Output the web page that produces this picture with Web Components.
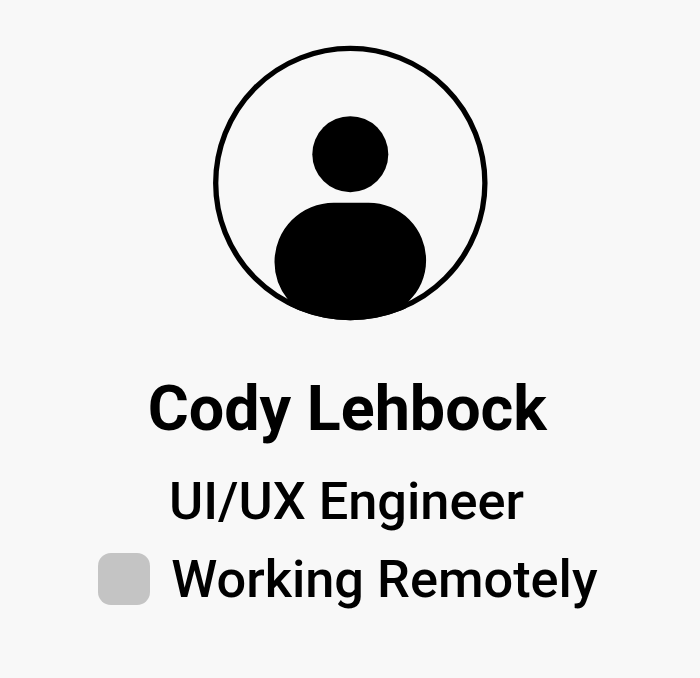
<!DOCTYPE html>
<html lang="en"><head><meta charset="utf-8"><title>Profile</title>
<style>html,body{margin:0;height:100%;background:#f8f8f8;overflow:hidden}</style></head>
<body>
<profile-card><user-avatar slot="avatar"></user-avatar><span slot="name">Cody Lehbock</span><span slot="role">UI/UX Engineer</span><status-line slot="status">Working Remotely</status-line></profile-card>
<script>
customElements.define('user-avatar', class extends HTMLElement{
 constructor(){super();this.attachShadow({mode:'open'}).innerHTML=`<style>:host{display:block;width:276px;height:276px}svg{display:block}</style>
<svg width="276" height="276" viewBox="0 0 276 276"><defs><clipPath id="c"><circle cx="138.3" cy="138" r="137.2"/></clipPath></defs>
<circle cx="138.3" cy="138" r="134.6" fill="none" stroke="#000" stroke-width="5.3"/><circle cx="138.3" cy="109.2" r="38"/>
<path d="M121.8 157.7H156.5A57.6 57.6 0 0 1 214.1 215.3C214.1 232 207.4 246 196.5 256.5L190 276H80L75.7 254.2A59.3 59.3 0 0 1 62.5 217A59.3 59.3 0 0 1 121.8 157.7Z" clip-path="url(#c)"/></svg>`}});
customElements.define('status-line', class extends HTMLElement{
 constructor(){super();this.attachShadow({mode:'open'}).innerHTML=`<style>:host{display:flex;align-items:flex-start;gap:21.4px}i{width:52px;height:52px;margin-top:5px;border-radius:13px;background:#c4c4c4}</style><i></i><span><slot></slot></span>`}});
customElements.define('profile-card', class extends HTMLElement{
 constructor(){super();this.attachShadow({mode:'open'}).innerHTML=`<style>:host{display:flex;flex-direction:column;align-items:center;box-sizing:border-box;width:700px;height:678px;padding-top:45px;font-family:Roboto,sans-serif;color:#000;white-space:nowrap}
h1{margin:50px 0 0;font-size:62.8px;line-height:76px;font-weight:700;padding-right:5.5px}
h2,.s{margin:0;font-size:52.3px;line-height:62px;font-weight:500;padding-right:7px}h2{margin-top:23px}.s{margin-top:16px;padding-right:4.6px}</style>
<slot name="avatar"></slot><h1><slot name="name"></slot></h1><h2><slot name="role"></slot></h2><div class="s"><slot name="status"></slot></div>`}});
</script></body></html>
